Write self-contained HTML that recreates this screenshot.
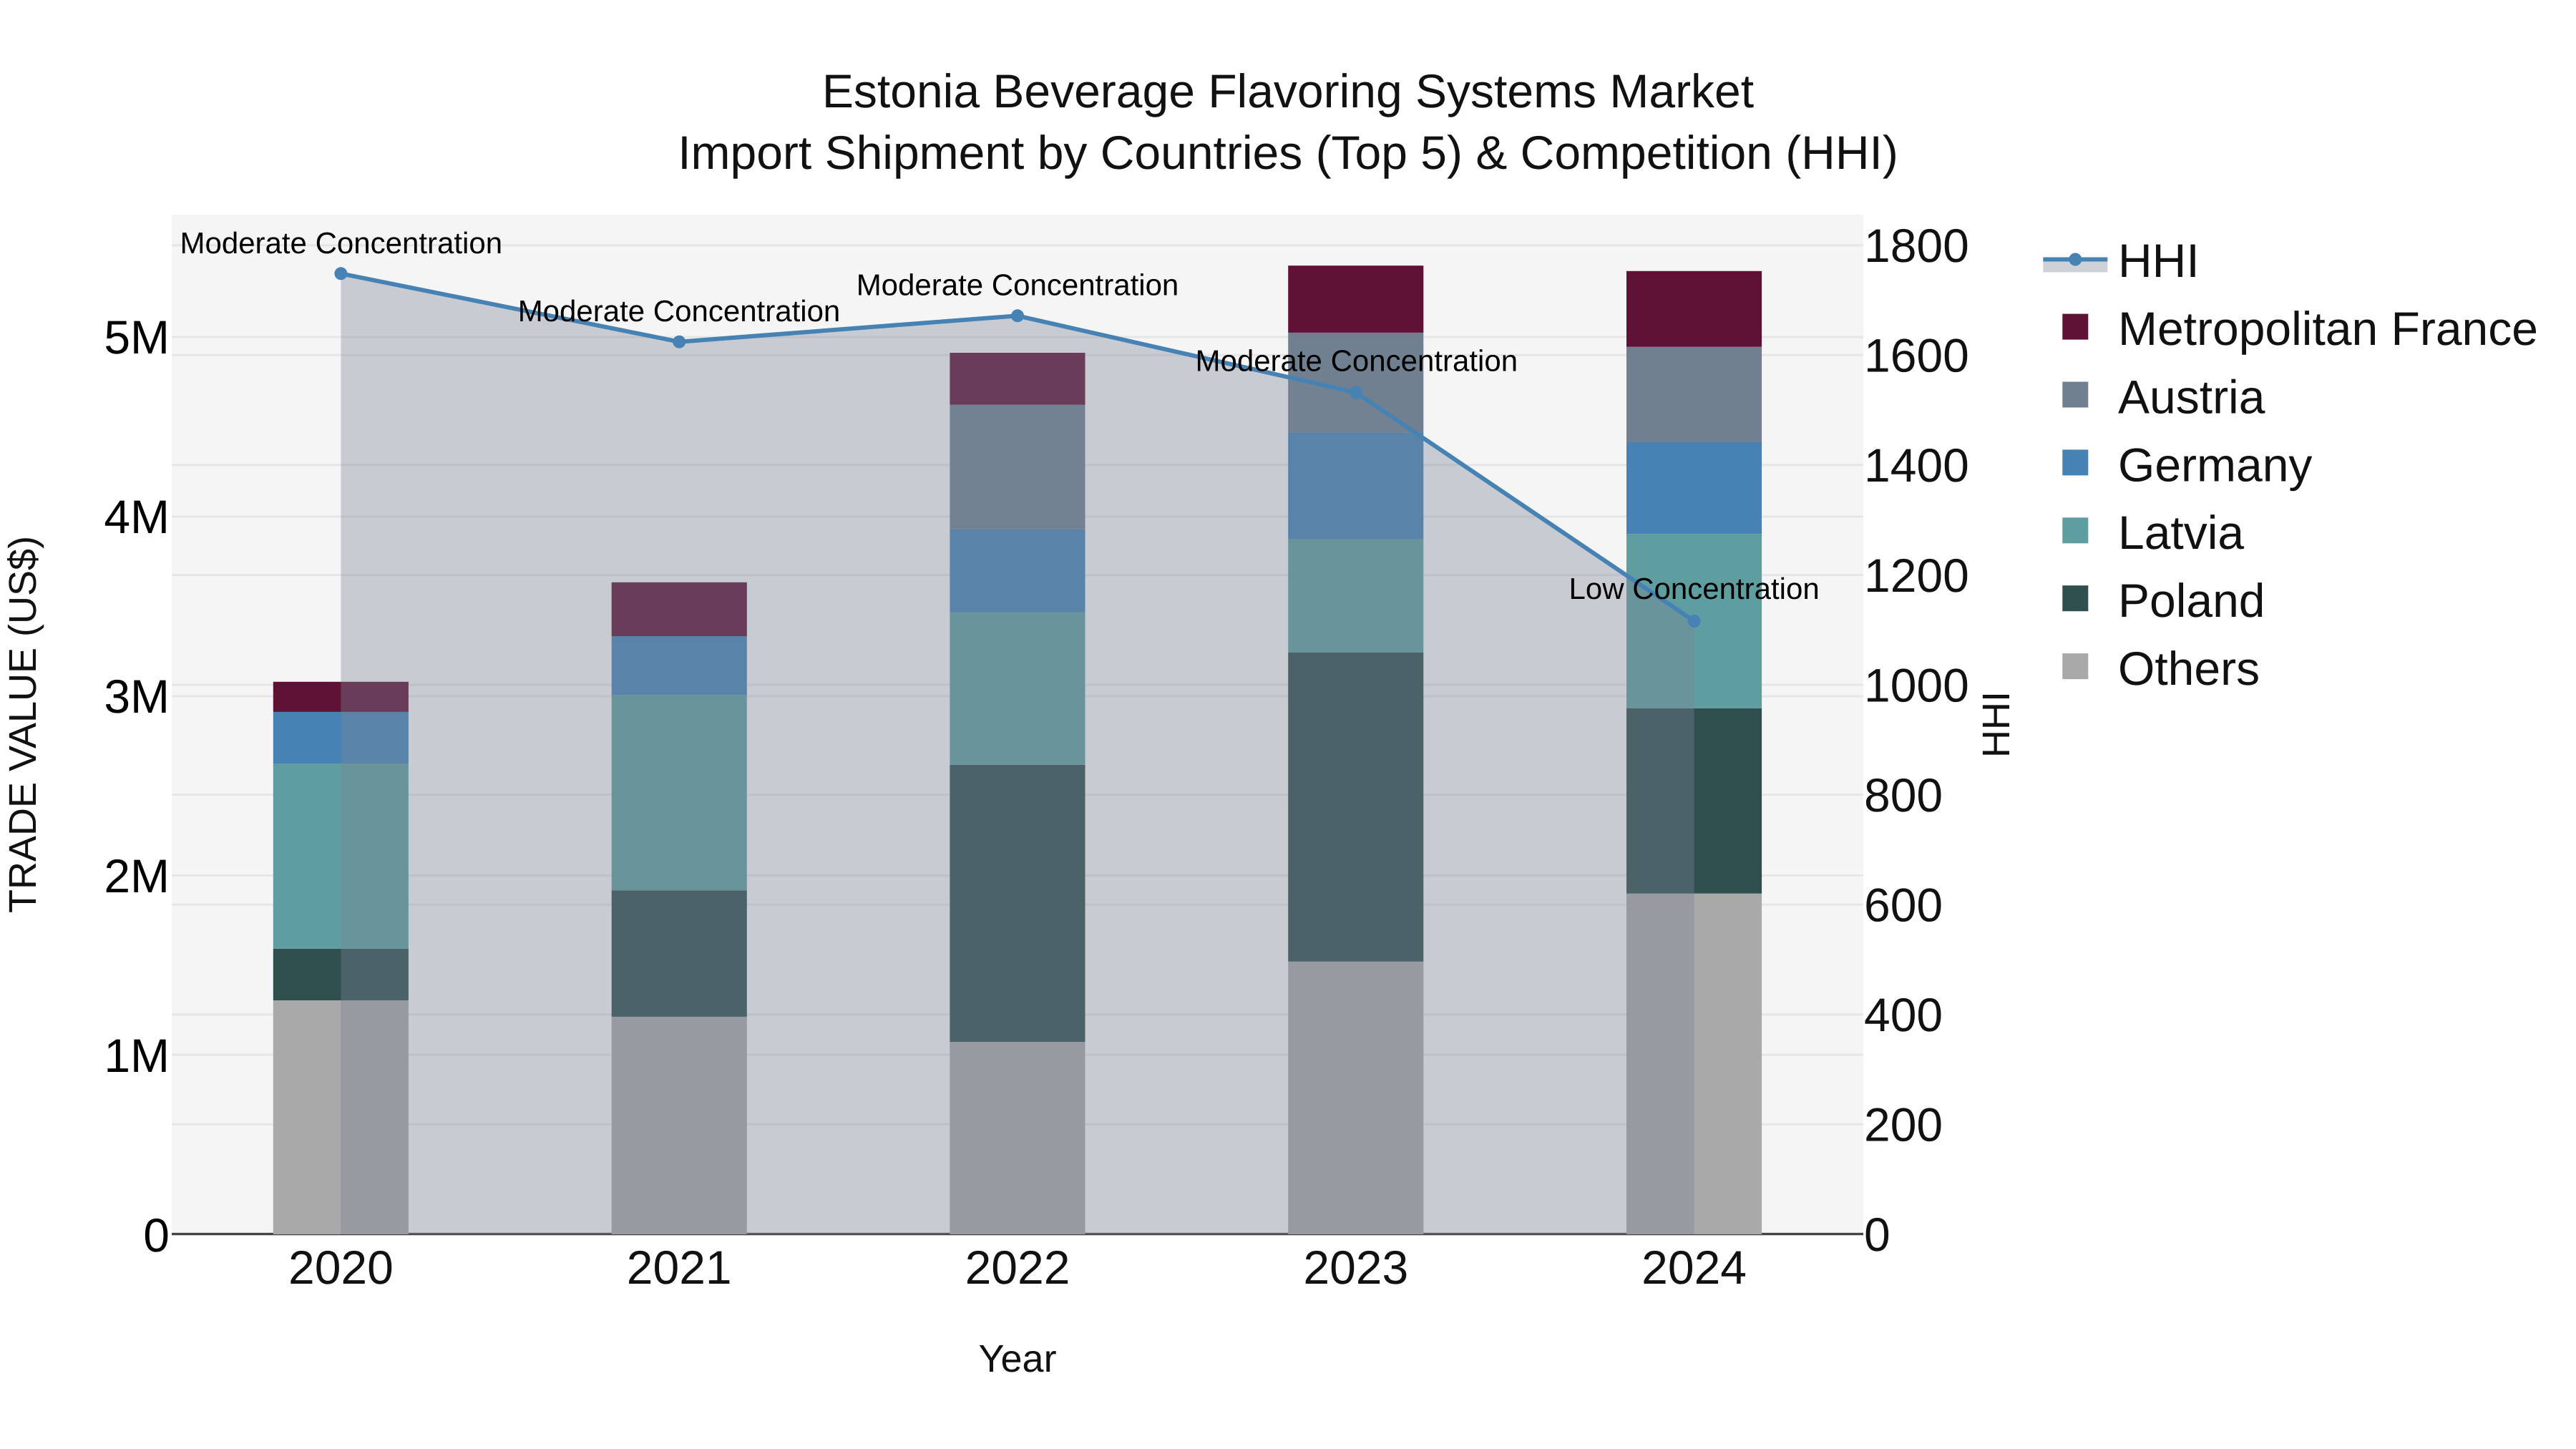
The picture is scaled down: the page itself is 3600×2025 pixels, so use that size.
<!DOCTYPE html>
<html><head><meta charset="utf-8"><style>
html,body{margin:0;padding:0;background:#fff;width:3600px;height:2025px;overflow:hidden}
svg{display:block}
text{font-family:"Liberation Sans",sans-serif;text-rendering:geometricPrecision}
.t{fill:#111;font-size:66px}
.k{fill:#000;font-size:66px}
.a{fill:#000;font-size:42px;text-anchor:middle}
.g{stroke:#e6e6e6;stroke-width:3}
.mid{text-anchor:middle}
</style></head><body>
<svg width="3600" height="2025" viewBox="0 0 3600 2025" xmlns="http://www.w3.org/2000/svg">
<rect width="3600" height="2025" fill="#fff"/>
<rect x="240" y="300" width="2364" height="1425" fill="#f5f5f5"/>
<g class="g">
<line x1="240" x2="2604" y1="342.8" y2="342.8"/><line x1="240" x2="2604" y1="471" y2="471"/><line x1="240" x2="2604" y1="496.2" y2="496.2"/><line x1="240" x2="2604" y1="649.8" y2="649.8"/><line x1="240" x2="2604" y1="722" y2="722"/><line x1="240" x2="2604" y1="803.6" y2="803.6"/><line x1="240" x2="2604" y1="957" y2="957"/><line x1="240" x2="2604" y1="973" y2="973"/><line x1="240" x2="2604" y1="1110.6" y2="1110.6"/><line x1="240" x2="2604" y1="1223.5" y2="1223.5"/><line x1="240" x2="2604" y1="1264.2" y2="1264.2"/><line x1="240" x2="2604" y1="1417.8" y2="1417.8"/><line x1="240" x2="2604" y1="1474" y2="1474"/><line x1="240" x2="2604" y1="1571.2" y2="1571.2"/>
</g>
<line x1="240" x2="2604" y1="1724.6" y2="1724.6" stroke="#444" stroke-width="3.4"/>
<!-- bars -->
<g>
<rect x="381.8" y="1398" width="189.1" height="327" fill="#A9A9A9"/><rect x="381.8" y="1325.9" width="189.1" height="72.1" fill="#2F4F4F"/><rect x="381.8" y="1067" width="189.1" height="258.9" fill="#5F9EA0"/><rect x="381.8" y="994.9" width="189.1" height="72.1" fill="#4682B4"/><rect x="381.8" y="952.8" width="189.1" height="42.1" fill="#601236"/>
<rect x="854.7" y="1420.9" width="189.1" height="304.1" fill="#A9A9A9"/><rect x="854.7" y="1244.3" width="189.1" height="176.6" fill="#2F4F4F"/><rect x="854.7" y="971.3" width="189.1" height="273" fill="#5F9EA0"/><rect x="854.7" y="889" width="189.1" height="82.3" fill="#4682B4"/><rect x="854.7" y="813.8" width="189.1" height="75.2" fill="#601236"/>
<rect x="1327.4" y="1456" width="189.1" height="269" fill="#A9A9A9"/><rect x="1327.4" y="1068.9" width="189.1" height="387.1" fill="#2F4F4F"/><rect x="1327.4" y="855.9" width="189.1" height="213" fill="#5F9EA0"/><rect x="1327.4" y="739.8" width="189.1" height="116.1" fill="#4682B4"/><rect x="1327.4" y="565.7" width="189.1" height="174.1" fill="#708090"/><rect x="1327.4" y="493" width="189.1" height="72.7" fill="#601236"/>
<rect x="1800.2" y="1343.8" width="189.1" height="381.2" fill="#A9A9A9"/><rect x="1800.2" y="912" width="189.1" height="431.8" fill="#2F4F4F"/><rect x="1800.2" y="753.8" width="189.1" height="158.2" fill="#5F9EA0"/><rect x="1800.2" y="604.6" width="189.1" height="149.2" fill="#4682B4"/><rect x="1800.2" y="464.9" width="189.1" height="139.7" fill="#708090"/><rect x="1800.2" y="371.2" width="189.1" height="93.7" fill="#601236"/>
<rect x="2273" y="1248.7" width="189.1" height="476.3" fill="#A9A9A9"/><rect x="2273" y="989.8" width="189.1" height="258.9" fill="#2F4F4F"/><rect x="2273" y="746.2" width="189.1" height="243.6" fill="#5F9EA0"/><rect x="2273" y="618" width="189.1" height="128.2" fill="#4682B4"/><rect x="2273" y="484.7" width="189.1" height="133.3" fill="#708090"/><rect x="2273" y="378.8" width="189.1" height="105.9" fill="#601236"/>
</g>
<!-- area + line -->
<path d="M476.4 382.3L949.2 477.7L1422 441.3L1894.8 548.5L2367.6 868V1725H476.4Z" fill="rgb(122,134,150)" fill-opacity=".37"/>
<path d="M476.4 382.3L949.2 477.7L1422 441.3L1894.8 548.5L2367.6 868" fill="none" stroke="#4682B4" stroke-width="6" stroke-linejoin="round"/>
<g fill="#4682B4"><circle cx="476.4" cy="382.3" r="9"/><circle cx="949.2" cy="477.7" r="9"/><circle cx="1422" cy="441.3" r="9"/><circle cx="1894.8" cy="548.5" r="9"/><circle cx="2367.6" cy="868" r="9"/></g>
<!-- annotations -->
<text class="a" x="476.8" y="354">Moderate Concentration</text>
<text class="a" x="949" y="449">Moderate Concentration</text>
<text class="a" x="1422" y="412.6">Moderate Concentration</text>
<text class="a" x="1895.8" y="518.6">Moderate Concentration</text>
<text class="a" x="2367.6" y="837">Low Concentration</text>
<!-- title -->
<text class="t mid" x="1800" y="150">Estonia Beverage Flavoring Systems Market</text>
<text class="t mid" x="1800" y="236">Import Shipment by Countries (Top 5) &amp; Competition (HHI)</text>
<!-- left ticks -->
<g text-anchor="end">
<text class="k" x="237" y="494">5M</text><text class="k" x="237" y="745">4M</text><text class="k" x="237" y="996">3M</text><text class="k" x="237" y="1247">2M</text><text class="k" x="237" y="1498">1M</text><text class="k" x="237" y="1749">0</text>
</g>
<!-- right ticks -->
<g>
<text class="t" x="2605" y="366">1800</text><text class="t" x="2605" y="519.5">1600</text><text class="t" x="2605" y="673">1400</text><text class="t" x="2605" y="827">1200</text><text class="t" x="2605" y="980.5">1000</text><text class="t" x="2605" y="1134">800</text><text class="t" x="2605" y="1287.5">600</text><text class="t" x="2605" y="1441">400</text><text class="t" x="2605" y="1594.5">200</text><text class="t" x="2605" y="1748">0</text>
</g>
<!-- x ticks -->
<g class="mid">
<text class="t mid" x="476.4" y="1794">2020</text><text class="t mid" x="949.2" y="1794">2021</text><text class="t mid" x="1422" y="1794">2022</text><text class="t mid" x="1894.8" y="1794">2023</text><text class="t mid" x="2367.6" y="1794">2024</text>
</g>
<!-- axis titles -->
<text class="mid" x="1422" y="1917" font-size="54" fill="#111">Year</text>
<text class="mid" transform="translate(50 1012.5) rotate(-90)" font-size="54" fill="#111">TRADE VALUE (US$)</text>
<text class="mid" transform="translate(2808 1012.5) rotate(-90)" font-size="54" fill="#111">HHI</text>
<!-- legend -->
<rect x="2855.3" y="362.5" width="90" height="18" fill="rgb(122,134,150)" fill-opacity=".37"/>
<line x1="2855.3" x2="2945.3" y1="362.5" y2="362.5" stroke="#4682B4" stroke-width="6"/>
<circle cx="2900.3" cy="362.5" r="9" fill="#4682B4"/>
<rect x="2882.3" y="438.6" width="36" height="36" fill="#601236"/>
<rect x="2882.3" y="533.5" width="36" height="36" fill="#708090"/>
<rect x="2882.3" y="628.4" width="36" height="36" fill="#4682B4"/>
<rect x="2882.3" y="723.3" width="36" height="36" fill="#5F9EA0"/>
<rect x="2882.3" y="818.2" width="36" height="36" fill="#2F4F4F"/>
<rect x="2882.3" y="913.1" width="36" height="36" fill="#A9A9A9"/>
<g>
<text class="t" x="2960" y="387">HHI</text><text class="t" x="2960" y="482">Metropolitan France</text><text class="t" x="2960" y="577.4">Austria</text><text class="t" x="2960" y="672.3">Germany</text><text class="t" x="2960" y="767.2">Latvia</text><text class="t" x="2960" y="862.1">Poland</text><text class="t" x="2960" y="957">Others</text>
</g>
</svg>
</body></html>
